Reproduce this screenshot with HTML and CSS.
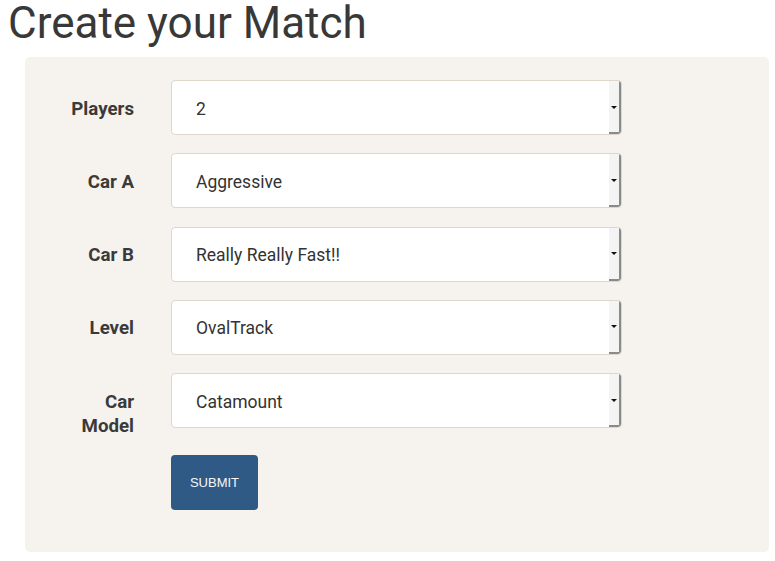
FILE: index.html
```html
<!DOCTYPE html>
<html>
<head>
<meta charset="utf-8">
<title>Create your Match</title>
<link rel="stylesheet" href="styles.css">
</head>
<body>
<h1 class="title">Create your Match</h1>
<form class="panel">
  <div class="row">
    <label class="label">Players</label>
    <div class="select"><span class="value">2</span><span class="arrow"></span></div>
  </div>
  <div class="row">
    <label class="label">Car A</label>
    <div class="select"><span class="value">Aggressive</span><span class="arrow"></span></div>
  </div>
  <div class="row">
    <label class="label">Car B</label>
    <div class="select"><span class="value">Really Really Fast!!</span><span class="arrow"></span></div>
  </div>
  <div class="row">
    <label class="label">Level</label>
    <div class="select"><span class="value">OvalTrack</span><span class="arrow"></span></div>
  </div>
  <div class="row">
    <label class="label">Car Model</label>
    <div class="select"><span class="value">Catamount</span><span class="arrow"></span></div>
  </div>
  <div class="row actions">
    <span class="label"></span>
    <button type="button" class="submit">SUBMIT</button>
  </div>
</form>
</body>
</html>
```
FILE: styles.css
```css
html, body {
  margin: 0;
  background: #ffffff;
}
body {
  padding: 0 8px;
  font-family: Roboto, "Liberation Sans", sans-serif;
  color: #333333;
}
.title {
  margin: 0 0 11px 0;
  font-size: 44px;
  line-height: 46px;
  font-weight: 400;
  color: #383838;
}
.panel {
  margin-left: 17px;
  width: 744px;
  box-sizing: border-box;
  background: #f6f3ee;
  border-radius: 5px;
  padding: 23px 0 42px 0;
  display: flex;
  flex-direction: column;
  gap: 18.3px;
}
.row {
  display: flex;
  align-items: flex-start;
  gap: 37px;
}
.label {
  width: 76px;
  margin-left: 33px;
  text-align: right;
  font-weight: 700;
  font-size: 18.7px;
  line-height: 24px;
  padding-top: 16.5px;
  color: #3a3a3a;
  flex: none;
}
.select {
  width: 451px;
  height: 55px;
  box-sizing: border-box;
  background: #ffffff;
  border: 1px solid #ddd6c9;
  border-radius: 4px;
  display: flex;
  align-items: center;
  position: relative;
  overflow: hidden;
}
.value {
  padding-left: 24px;
  padding-top: 2px;
  font-size: 17.5px;
  color: #333333;
  flex: 1;
}
.arrow {
  align-self: stretch;
  width: 10px;
  background: #f4f4f4;
  border-right: 2px solid #8a8a8a;
  border-bottom: 2px solid #8a8a8a;
  border-bottom-right-radius: 3px;
  position: relative;
}
.arrow::after {
  content: "";
  position: absolute;
  left: 2px;
  top: 50%;
  margin-top: -1px;
  border-left: 3px solid transparent;
  border-right: 3px solid transparent;
  border-top: 3px solid #111111;
}
.actions {
  margin-top: -1px;
}
.actions .label {
  padding-top: 0;
}
.submit {
  width: 87px;
  height: 55px;
  border: none;
  border-radius: 4px;
  background: #2f5a86;
  color: #f4f7fa;
  font-family: "Liberation Sans", Arial, sans-serif;
  font-size: 13px;
  padding: 0;
  cursor: pointer;
}
```
